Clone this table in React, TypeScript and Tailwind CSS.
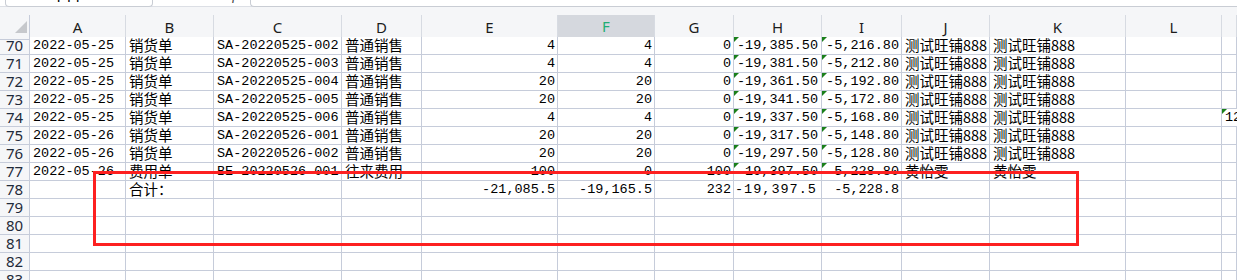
import React from "react";

type Cell = { t: string; a?: "l" | "r"; cjk?: boolean; tri?: boolean; wide?: boolean };

const cols = ["A", "B", "C", "D", "E", "F", "G", "H", "I", "J", "K", "L", "M"];

const L = (t: string, extra: Partial<Cell> = {}): Cell => ({ t, a: "l", ...extra });
const R = (t: string, extra: Partial<Cell> = {}): Cell => ({ t, a: "r", ...extra });
const C = (t: string): Cell => ({ t, a: "l", cjk: true });
const E: Cell = { t: "" };

const mk = (
  date: string,
  type: string,
  no: string,
  kind: string,
  e: string,
  f: string,
  g: string,
  h: string,
  i: string,
  j: string,
  k: string
): Cell[] => [
  L(date),
  C(type),
  L(no),
  C(kind),
  R(e),
  R(f),
  R(g),
  L(h, { tri: true }),
  R(i, { tri: true }),
  C(j),
  C(k),
  E,
  E,
];

const rows: { n: number; cells: Cell[] }[] = [
  { n: 70, cells: mk("2022-05-25", "销货单", "SA-20220525-002", "普通销售", "4", "4", "0", "-19,385.50", "-5,216.80", "测试旺铺888", "测试旺铺888") },
  { n: 71, cells: mk("2022-05-25", "销货单", "SA-20220525-003", "普通销售", "4", "4", "0", "-19,381.50", "-5,212.80", "测试旺铺888", "测试旺铺888") },
  { n: 72, cells: mk("2022-05-25", "销货单", "SA-20220525-004", "普通销售", "20", "20", "0", "-19,361.50", "-5,192.80", "测试旺铺888", "测试旺铺888") },
  { n: 73, cells: mk("2022-05-25", "销货单", "SA-20220525-005", "普通销售", "20", "20", "0", "-19,341.50", "-5,172.80", "测试旺铺888", "测试旺铺888") },
  { n: 74, cells: mk("2022-05-25", "销货单", "SA-20220525-006", "普通销售", "4", "4", "0", "-19,337.50", "-5,168.80", "测试旺铺888", "测试旺铺888") },
  { n: 75, cells: mk("2022-05-26", "销货单", "SA-20220526-001", "普通销售", "20", "20", "0", "-19,317.50", "-5,148.80", "测试旺铺888", "测试旺铺888") },
  { n: 76, cells: mk("2022-05-26", "销货单", "SA-20220526-002", "普通销售", "20", "20", "0", "-19,297.50", "-5,128.80", "测试旺铺888", "测试旺铺888") },
  { n: 77, cells: mk("2022-05-26", "费用单", "BE-20220526-001", "往来费用", "100", "0", "100", "-19,397.50", "-5,228.80", "黄怡雯", "黄怡雯") },
  {
    n: 78,
    cells: [E, C("合计："), E, E, R("-21,085.5"), R("-19,165.5"), R("232"), L("-19,397.5", { wide: true }), R("-5,228.8"), E, E, E, E],
  },
  { n: 79, cells: Array(13).fill(E) },
  { n: 80, cells: Array(13).fill(E) },
  { n: 81, cells: Array(13).fill(E) },
  { n: 82, cells: Array(13).fill(E) },
  { n: 83, cells: Array(13).fill(E) },
];

// row 74, column M partial "12" with triangle
rows[4].cells[12] = L("12", { tri: true });

const gridCols =
  "grid grid-cols-[30px_96px_88px_128px_80px_136px_97px_79px_88px_80px_88px_136px_96px_1fr]";

function Tri() {
  return (
    <svg className="absolute left-0 top-0" width="5" height="5" viewBox="0 0 5 5">
      <polygon points="0,0 5,0 0,5" fill="#1a7f1a" />
    </svg>
  );
}

function DataCell({ c }: { c: Cell }) {
  const align = c.a === "r" ? "justify-end pr-[2px]" : c.wide ? "justify-start pl-[1px] tracking-[1px]" : "justify-start pl-[3px]";
  const font = c.cjk
    ? "font-['Noto_Sans_CJK_SC',sans-serif] text-[14.5px]"
    : "font-['Liberation_Mono','DejaVu_Sans_Mono',monospace] text-[13.5px]";
  return (
    <div
      className={`relative h-[18px] border-r border-b border-[#c6ccda] bg-white flex items-center overflow-visible whitespace-nowrap text-black leading-none ${align} ${font}`}
    >
      {c.tri && <Tri />}
      <span>{c.t}</span>
    </div>
  );
}

export default function App() {
  return (
    <div className="relative w-[1237px] h-[280px] overflow-hidden bg-[#f5f6f8] font-['Noto_Sans',sans-serif]">
      {/* formula bar remnants */}
      <div className="h-[7px] flex bg-white border-b border-[#dcdfe5]">
        <div className="ml-[5px] w-[148px] h-[7px] border border-t-0 border-[#c9cdd4] rounded-b-[4px] bg-white overflow-hidden flex justify-center">
          <span className="-mt-[11px] ml-[-20px] text-[15px] text-black leading-none">F11</span>
        </div>
        <div className="w-[97px] h-[7px] overflow-hidden flex justify-end pr-[8px] gap-[6px]">
          <span className="-mt-[12px] text-[13px] text-[#555] leading-none">⌄</span>
          <span className="-mt-[11px] text-[14px] italic text-[#444] leading-none font-['Liberation_Serif',serif]">fx</span>
        </div>
        <div className="flex-1 h-[7px] border border-t-0 border-r-0 border-[#c9cdd4] rounded-bl-[4px] bg-white" />
      </div>
      <div className="h-[8px]" />
      {/* column headers */}
      <div className={`${gridCols} h-[22px]`}>
        <div className="relative border-r border-b border-[#c6ccda] bg-[#f5f6f8]">
          <svg className="absolute left-[15px] top-[6px]" width="12" height="12" viewBox="0 0 12 12">
            <polygon points="12,0 12,12 0,12" fill="#c6c8cc" />
          </svg>
        </div>
        {cols.map((c) =>
          c === "F" ? (
            <div
              key={c}
              className="flex items-center justify-center border-r border-[#d7dbe2] border-b-2 border-b-[#1fb27a] bg-[#d5d8de] text-[#1fae74] text-[15px]"
            >
              {c}
            </div>
          ) : (
            <div
              key={c}
              className="flex items-center justify-center border-r border-[#d7dbe2] border-b border-b-[#c6ccda] bg-[#f5f6f8] text-[#1c1c1c] text-[15px]"
            >
              {c === "M" ? "" : c}
            </div>
          )
        )}
      </div>
      {/* rows */}
      {rows.map((r) => (
        <div key={r.n} className={gridCols}>
          <div className="h-[18px] flex items-center justify-center border-r border-b border-[#c6ccda] bg-[#f5f6f8] text-[15px] text-[#1f2a3a] leading-none">
            {r.n}
          </div>
          {r.cells.map((c, i) => (
            <DataCell key={i} c={c} />
          ))}
        </div>
      ))}
      {/* red annotation box */}
      <div className="absolute left-[93px] top-[171px] w-[986px] h-[75px] border-[3px] border-[#fd2020]" />
    </div>
  );
}
